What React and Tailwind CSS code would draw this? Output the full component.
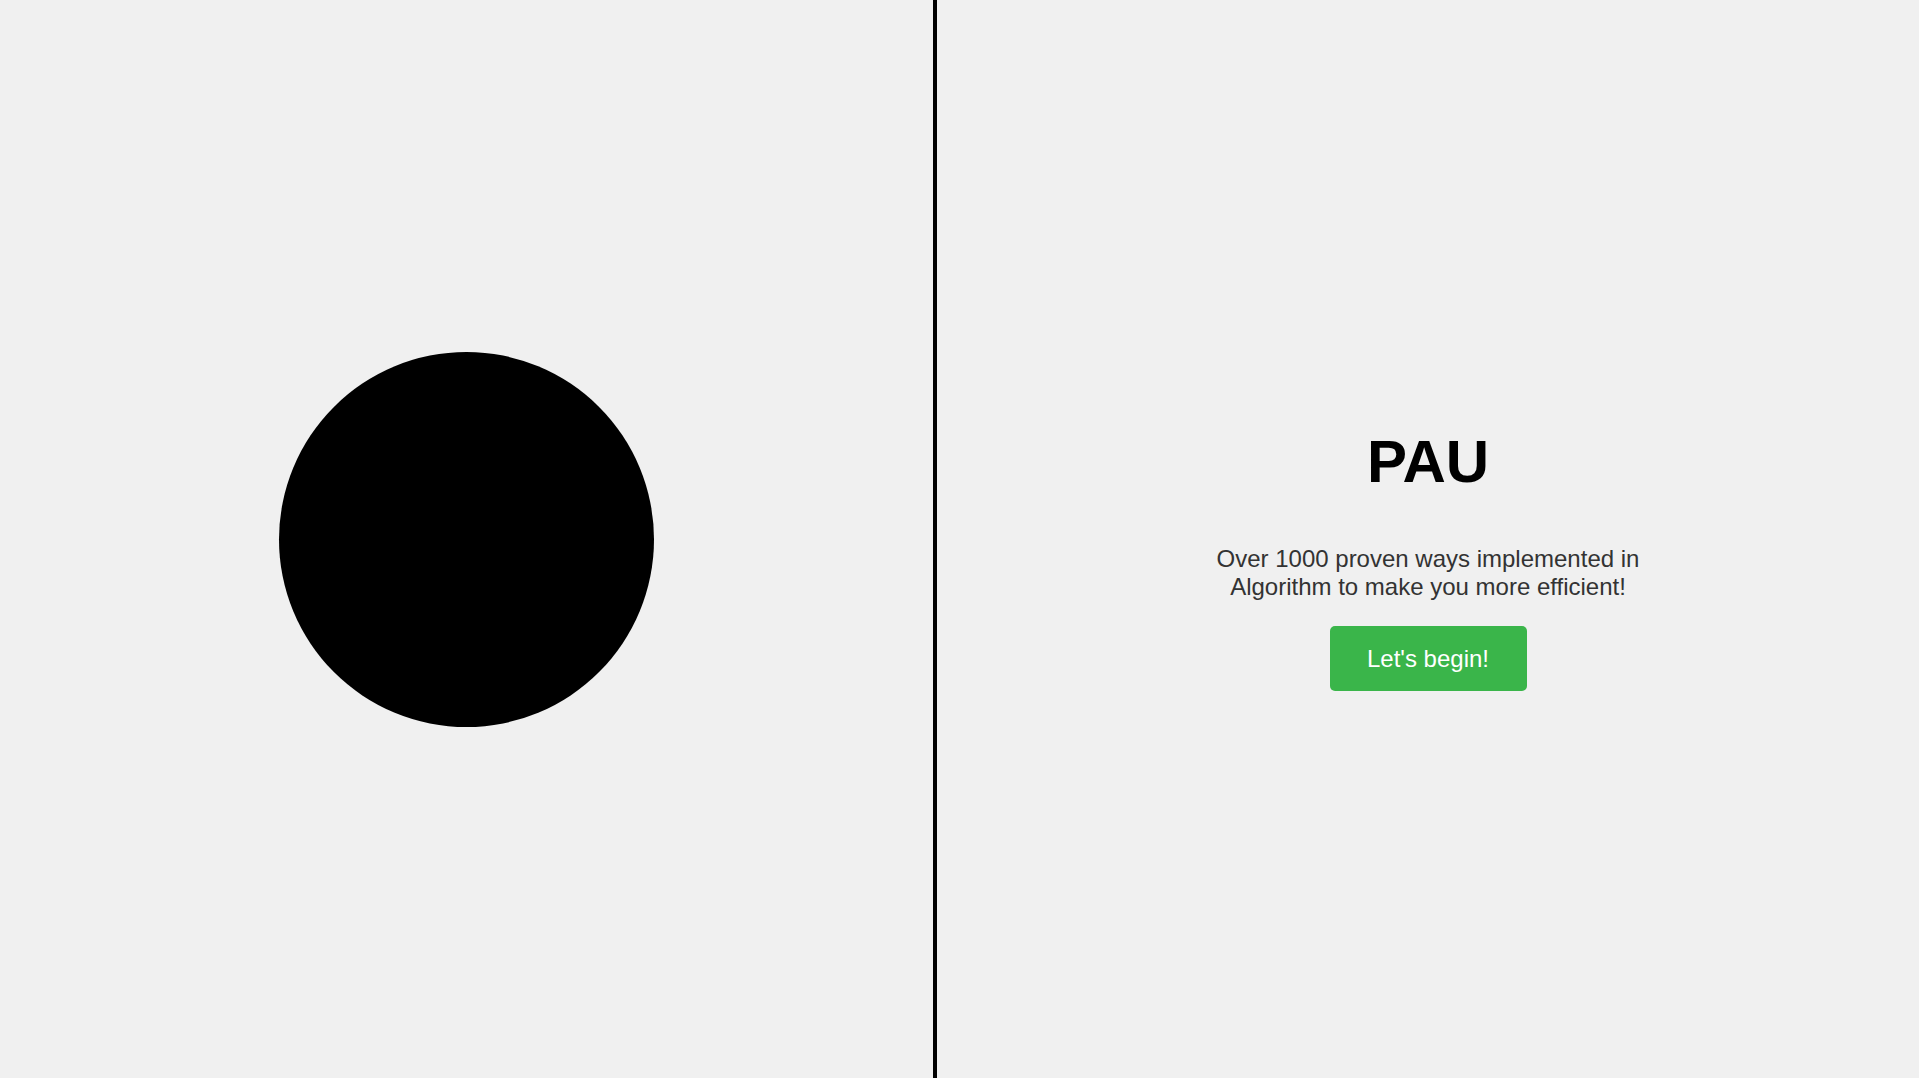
export default function App() {
  return (
    <div className="flex h-screen w-full bg-[#f0f0f0] font-['Liberation_Sans',Arial,sans-serif]">
      <div className="flex w-[933px] shrink-0 items-center justify-center">
        <div className="h-[375px] w-[375px] rounded-full bg-black" />
      </div>
      <div className="w-[4px] shrink-0 bg-black" />
      <div className="flex flex-1 flex-col items-center justify-center pt-[40px] text-center">
        <h1 className="text-[60px] font-bold leading-[1.15] text-black">PAU</h1>
        <p className="mt-[49px] max-w-[460px] text-[24px] leading-[1.15] text-[#333333]">
          Over 1000 proven ways implemented in Algorithm to make you more efficient!
        </p>
        <button className="mt-[26px] h-[65px] w-[197px] rounded-[5px] bg-[#3ab54a] text-[24px] leading-[1.15] text-white">
          Let's begin!
        </button>
      </div>
    </div>
  );
}
